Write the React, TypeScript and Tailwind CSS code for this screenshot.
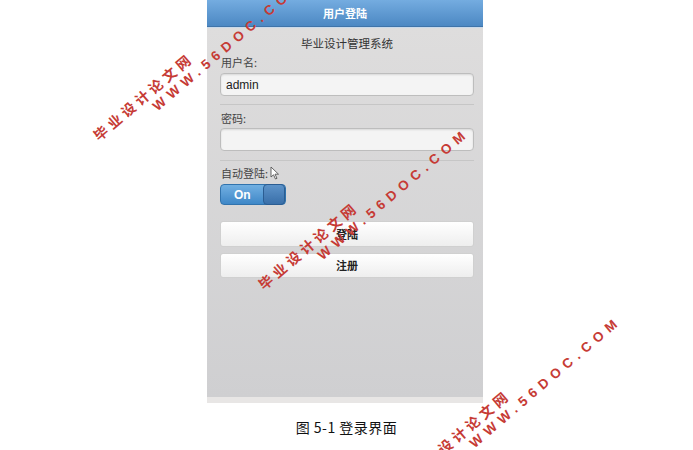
const Watermark = ({ className }: { className: string }) => (
  <div
    className={`pointer-events-none absolute origin-top-left rotate-[-40.5deg] font-bold whitespace-nowrap text-[#c63b35] ${className}`}
  >
    <div className="font-['Noto_Sans_CJK_SC',sans-serif] text-[14px] leading-[16px] tracking-[4px]">
      毕业设计论文网
    </div>
    <div className="mt-[1px] ml-[64px] font-['Liberation_Sans',sans-serif] text-[13.5px] leading-[16px] tracking-[5.6px]">
      WWW.56DOC.COM
    </div>
  </div>
);

const Cursor = () => (
  <svg width="10" height="14" viewBox="0 0 10 14" className="ml-[2px]">
    <path
      d="M1 1 L1 11 L3.5 8.8 L5.5 13 L7 12.3 L5 8.2 L8.5 8.2 Z"
      fill="#fff"
      stroke="#555"
      strokeWidth="0.9"
      strokeLinejoin="round"
    />
  </svg>
);

const Label = ({ children, className = "" }: { children: React.ReactNode; className?: string }) => (
  <div className={`flex h-[14px] items-center pl-[1px] text-[11px] leading-[14px] text-[#444] ${className}`}>
    {children}
  </div>
);

const Button = ({ children, className = "" }: { children: React.ReactNode; className?: string }) => (
  <div
    className={`flex items-center justify-center rounded-[3px] border border-[#d0d0d0] bg-gradient-to-b from-white to-[#eeeeee] text-[11px] font-bold text-[#222] ${className}`}
  >
    {children}
  </div>
);

export default function App() {
  return (
    <div className="relative h-[450px] w-[693px] overflow-hidden bg-white font-['Noto_Sans_CJK_SC','Liberation_Sans',sans-serif]">
      <div className="ml-[207px] flex w-[276px] flex-col">
        <div className="flex h-[27px] items-center justify-center border-b border-[#3f74a9] bg-gradient-to-b from-[#74ace0] to-[#4c88c3]">
          <span className="text-[11px] font-bold text-white">用户登陆</span>
        </div>
        <div className="h-[1px] bg-[#c9d9ea]" />
        <div className="flex h-[369px] flex-col bg-gradient-to-b from-[#dedddd] to-[#cfcfd1] pr-[9px] pl-[13px]">
          <div className="mt-[8px] h-[14px] text-center text-[11.5px] leading-[14px] text-[#333]">
            毕业设计管理系统
          </div>
          <Label className="mt-[5px]">用户名:</Label>
          <div className="mt-[4px] flex h-[23px] items-center rounded-[4px] border border-[#bdbdbd] bg-[#f4f4f4] pl-[5px] font-['Liberation_Sans',sans-serif] text-[12px] text-[#222] shadow-[inset_0_1px_2px_rgba(0,0,0,0.12)]">
            admin
          </div>
          <div className="mt-[8px] h-[1px] bg-[#c6c6c6]" />
          <Label className="mt-[6px]">密码:</Label>
          <div className="mt-[3px] h-[23px] rounded-[4px] border border-[#bdbdbd] bg-[#f4f4f4] shadow-[inset_0_1px_2px_rgba(0,0,0,0.12)]" />
          <div className="mt-[9px] h-[1px] bg-[#c6c6c6]" />
          <Label className="mt-[5px]">
            自动登陆:
            <Cursor />
          </Label>
          <div className="mt-[4px] flex h-[21px] w-[66px] items-center rounded-[4px] border border-[#3173ad] bg-gradient-to-b from-[#72b0e2] to-[#3e87c7] pl-[1px]">
            <span className="w-[42px] text-center font-['Liberation_Sans',sans-serif] text-[12px] font-bold text-white">
              On
            </span>
            <div className="ml-auto h-[21px] w-[23px] rounded-[4px] border border-[#2b5d92] bg-gradient-to-b from-[#5d93c9] to-[#396fa9]" />
          </div>
          <Button className="mt-[16px] h-[26px]">登陆</Button>
          <Button className="mt-[6px] h-[25px]">注册</Button>
        </div>
        <div className="h-[6px] bg-[#e8e6e5]" />
      </div>
      <div className="mt-[15px] text-center text-[14px] leading-[18px] tracking-[0.5px] text-[#111]">
        图 5-1 登录界面
      </div>
      <Watermark className="top-[131px] left-[90px]" />
      <Watermark className="top-[280px] left-[255px]" />
      <Watermark className="top-[468px] left-[407px]" />
    </div>
  );
}
